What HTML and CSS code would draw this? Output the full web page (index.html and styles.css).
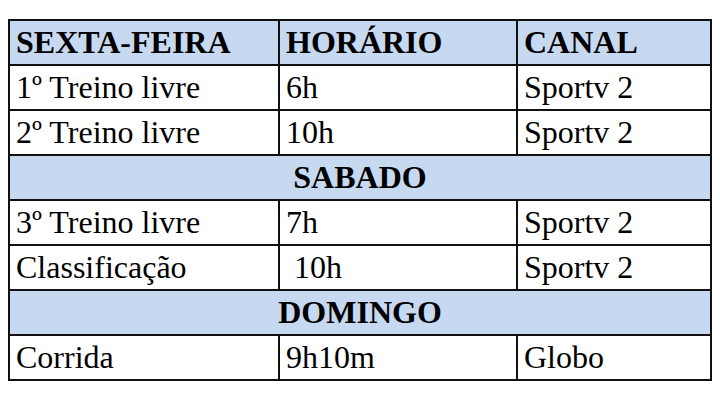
FILE: index.html
```html
<!DOCTYPE html>
<html>
<head>
<meta charset="utf-8">
<link rel="stylesheet" href="styles.css">
</head>
<body>
<table class="grade">
  <colgroup><col class="c1"><col class="c2"><col class="c3"></colgroup>
  <tr class="head"><td>SEXTA-FEIRA</td><td>HORÁRIO</td><td>CANAL</td></tr>
  <tr><td>1º Treino livre</td><td>6h</td><td>Sportv 2</td></tr>
  <tr><td>2º Treino livre</td><td>10h</td><td>Sportv 2</td></tr>
  <tr class="day"><td colspan="3">SABADO</td></tr>
  <tr><td>3º Treino livre</td><td>7h</td><td>Sportv 2</td></tr>
  <tr><td>Classificação</td><td class="indent">10h</td><td>Sportv 2</td></tr>
  <tr class="day"><td colspan="3">DOMINGO</td></tr>
  <tr><td>Corrida</td><td>9h10m</td><td>Globo</td></tr>
</table>
</body>
</html>
```
FILE: styles.css
```css
html, body {
  margin: 0;
  padding: 0;
  background: #ffffff;
}
body {
  padding: 19px 0 0 8px;
  font-family: "Liberation Serif", serif;
  color: #000;
}
.grade {
  border-collapse: collapse;
  table-layout: fixed;
  width: 704px;
  font-family: "Liberation Serif", serif;
}
.c1 { width: 270px; }
.c2 { width: 238px; }
.c3 { width: 194px; }
.grade td {
  font-family: "Liberation Serif", serif;
  border: 2px solid #111;
  font-size: 32px;
  line-height: 36px;
  height: 43px;
  box-sizing: border-box;
  padding: 3px 6px 4px 6px;
  vertical-align: top;
  white-space: nowrap;
}
.grade td.indent {
  padding-left: 14px;
}
.head td {
  background: #c6d9f1;
  font-weight: bold;
}
.day td {
  background: #c6d9f1;
  font-weight: bold;
  text-align: center;
}
```
